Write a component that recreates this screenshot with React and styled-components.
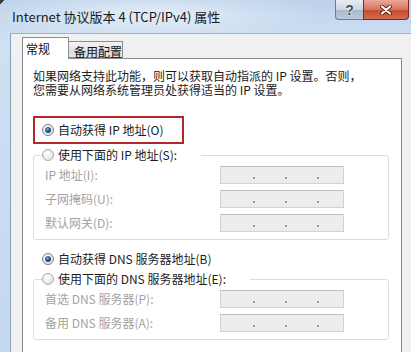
import React from 'react';
import styled, { createGlobalStyle } from 'styled-components';

const FONT = `"Noto Sans CJK SC", "Liberation Sans", sans-serif`;

const GlobalStyle = createGlobalStyle`
  body {
    margin: 0;
    background: #fff;
  }
  * {
    box-sizing: border-box;
  }
`;

const Window = styled.div`
  width: 411px;
  height: 352px;
  overflow: hidden;
  display: flex;
  flex-direction: column;
  font-family: ${FONT};
  background:
    linear-gradient(135deg, #3a3a3a 0 3px, transparent 3px),
    radial-gradient(ellipse 170px 26px at 150px 14px, rgba(255, 255, 255, 0.55), transparent),
    linear-gradient(to bottom, #bcd2eb, #cfe0f2 40px, #c4d8ee);
`;

const TitleBar = styled.div`
  height: 33px;
  display: flex;
  justify-content: space-between;
  align-items: flex-start;
  flex: none;
`;

const Title = styled.div`
  padding: 8px 0 0 12px;
  font-size: 13px;
  line-height: 17px;
  color: #1b1b1b;
`;

const Controls = styled.div`
  display: flex;
  margin-right: 2px;
`;

const HelpButton = styled.div`
  width: 28px;
  height: 20px;
  border: 1px solid #6c7d93;
  border-top: none;
  border-right: none;
  border-bottom-left-radius: 4px;
  background: linear-gradient(#e6edf5, #cbd6e3 50%, #a9b8cb 51%, #bccadb);
  display: flex;
  align-items: center;
  justify-content: center;
  font-family: "Liberation Sans", sans-serif;
  font-weight: bold;
  font-size: 14px;
  color: #3d4b5e;
  text-shadow: 0 0 2px #fff, 0 0 1px #fff;
`;

const CloseButton = styled.div`
  width: 46px;
  height: 20px;
  border: 1px solid #7a2a1f;
  border-top: none;
  border-bottom-right-radius: 4px;
  background: linear-gradient(#eaa899, #d7745f 50%, #c44a2f 51%, #d66c4e);
  display: flex;
  align-items: center;
  justify-content: center;
`;

const Client = styled.div`
  flex: 1;
  margin-left: 10px;
  border-left: 1px solid #8aa0ba;
  border-top: 1px solid #9fb2c8;
  background: #f0f0f0;
  padding: 0 9px 0 11px;
  display: flex;
  flex-direction: column;
`;

const TabRow = styled.div`
  height: 24px;
  display: flex;
  align-items: flex-end;
  flex: none;
`;

const Tab = styled.div`
  position: relative;
  z-index: ${({ $active }) => ($active ? 1 : 0)};
  width: ${({ $active }) => ($active ? '47px' : '54px')};
  height: ${({ $active }) => ($active ? '22px' : '17px')};
  margin-bottom: ${({ $active }) => ($active ? '-1px' : '0')};
  padding: ${({ $active }) => ($active ? '4px 0 0 3px' : '3px 0 0 5px')};
  border: 1px solid #898c95;
  border-bottom: ${({ $active }) => ($active ? 'none' : '1px solid #898c95')};
  border-left: ${({ $active }) => ($active ? '1px solid #898c95' : 'none')};
  background: ${({ $active }) =>
    $active ? '#fff' : 'linear-gradient(#f3f3f3, #e6e6e6 50%, #dadada 51%, #e2e2e2)'};
  font-size: 12px;
  line-height: 14px;
  color: #111;
  white-space: nowrap;
`;

const Panel = styled.div`
  flex: 1;
  background: #fff;
  border: 1px solid #898c95;
  border-bottom: none;
  padding: 10px 12px 0 10px;
`;

const Desc = styled.p`
  margin: 0;
  font-size: 12px;
  line-height: 14px;
  color: #1c1c1c;
  white-space: nowrap;
`;

const Highlight = styled.div`
  margin-top: 19px;
  width: 151px;
  height: 28px;
  border: 2px solid #b3272c;
  display: flex;
  align-items: center;
  padding-left: 7px;
`;

const Option = styled.label`
  display: flex;
  align-items: center;
  gap: 4px;
  font-size: 12px;
  line-height: 14px;
  color: #1c1c1c;
  white-space: nowrap;
`;

const Radio = styled.span`
  position: relative;
  flex: none;
  width: 12px;
  height: 12px;
  border-radius: 50%;
  border: 1px solid ${({ $checked }) => ($checked ? '#7d7d7d' : '#a9a9a9')};
  background: radial-gradient(circle at 40% 35%, #ffffff, #dcdcdc);

  &::after {
    content: '';
    display: ${({ $checked }) => ($checked ? 'block' : 'none')};
    position: absolute;
    inset: 2px;
    border-radius: 50%;
    background: radial-gradient(circle at 40% 35%, #79a8d6, #1f4c7a 55%, #0c1f36);
  }
`;

const Standalone = styled.div`
  margin-top: 12px;
  padding-left: 9px;
`;

const Group = styled.fieldset`
  margin: ${({ $gap }) => $gap}px 0 0;
  padding: 4px 12px 7px 8px;
  border: 1px solid #d5dfe5;
  border-radius: 3px;
  min-width: 0;
`;

const Legend = styled.legend`
  padding: 0 24px 0 0;
  line-height: 14px;
`;

const FieldRow = styled.div`
  display: flex;
  align-items: center;
  height: 18px;
  padding-left: 3px;

  & + & {
    margin-top: 6px;
  }
`;

const FieldLabel = styled.span`
  width: 175px;
  flex: none;
  font-size: 12px;
  line-height: 14px;
  color: #a3a3a3;
  white-space: nowrap;
`;

const IpBox = styled.div`
  width: 124px;
  height: 18px;
  border: 1px solid #d2d2d2;
  border-top-color: #bdbdbd;
  background: #ededed;
  display: flex;
  align-items: flex-end;
  gap: 30px;
  padding: 0 0 4px 32px;
`;

const IpDot = styled.span`
  width: 2px;
  height: 2px;
  background: #9f9f9f;
`;

const IpField = () => (
  <IpBox>
    <IpDot />
    <IpDot />
    <IpDot />
  </IpBox>
);

const CloseIcon = () => (
  <svg width="12" height="10" viewBox="0 0 12 10">
    <path d="M2 1.5 L10 8.5 M10 1.5 L2 8.5" stroke="#5a1d14" strokeWidth="4" strokeLinecap="round" />
    <path d="M2 1.5 L10 8.5 M10 1.5 L2 8.5" stroke="#fff" strokeWidth="2.2" strokeLinecap="round" />
  </svg>
);

const ipRows = ['IP 地址(I):', '子网掩码(U):', '默认网关(D):'];
const dnsRows = ['首选 DNS 服务器(P):', '备用 DNS 服务器(A):'];

export default function App() {
  return (
    <>
      <GlobalStyle />
      <Window>
        <TitleBar>
          <Title>Internet 协议版本 4 (TCP/IPv4) 属性</Title>
          <Controls>
            <HelpButton>?</HelpButton>
            <CloseButton>
              <CloseIcon />
            </CloseButton>
          </Controls>
        </TitleBar>

        <Client>
          <TabRow>
            <Tab $active>常规</Tab>
            <Tab>备用配置</Tab>
          </TabRow>

          <Panel>
            <Desc>
              如果网络支持此功能，则可以获取自动指派的 IP 设置。否则，
              <br />
              您需要从网络系统管理员处获得适当的 IP 设置。
            </Desc>

            <Highlight>
              <Option>
                <Radio $checked />
                自动获得 IP 地址(O)
              </Option>
            </Highlight>

            <Group $gap={4}>
              <Legend>
                <Option>
                  <Radio />
                  使用下面的 IP 地址(S):
                </Option>
              </Legend>
              {ipRows.map((label) => (
                <FieldRow key={label}>
                  <FieldLabel>{label}</FieldLabel>
                  <IpField />
                </FieldRow>
              ))}
            </Group>

            <Standalone>
              <Option>
                <Radio $checked />
                自动获得 DNS 服务器地址(B)
              </Option>
            </Standalone>

            <Group $gap={6}>
              <Legend>
                <Option>
                  <Radio />
                  使用下面的 DNS 服务器地址(E):
                </Option>
              </Legend>
              {dnsRows.map((label) => (
                <FieldRow key={label}>
                  <FieldLabel>{label}</FieldLabel>
                  <IpField />
                </FieldRow>
              ))}
            </Group>
          </Panel>
        </Client>
      </Window>
    </>
  );
}
